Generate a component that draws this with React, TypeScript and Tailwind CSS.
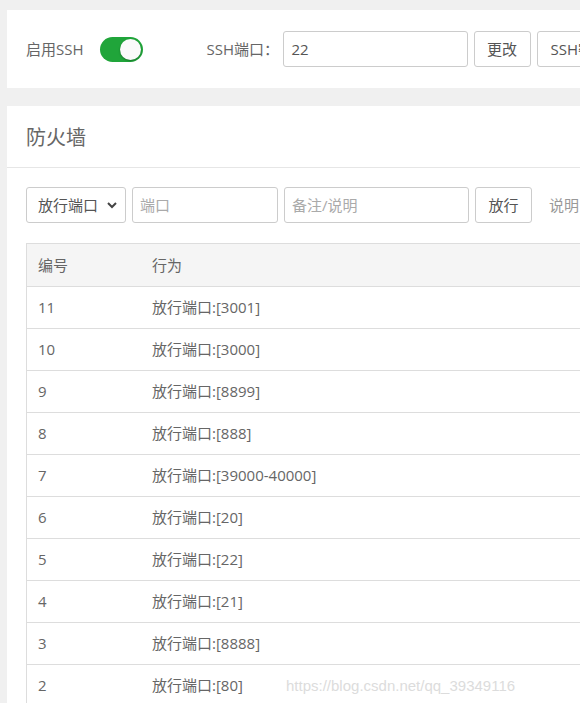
import React from "react";

const rows: { id: number; action: string }[] = [
  { id: 11, action: "放行端口:[3001]" },
  { id: 10, action: "放行端口:[3000]" },
  { id: 9, action: "放行端口:[8899]" },
  { id: 8, action: "放行端口:[888]" },
  { id: 7, action: "放行端口:[39000-40000]" },
  { id: 6, action: "放行端口:[20]" },
  { id: 5, action: "放行端口:[22]" },
  { id: 4, action: "放行端口:[21]" },
  { id: 3, action: "放行端口:[8888]" },
  { id: 2, action: "放行端口:[80]" },
];

const font = {
  fontFamily: '"Open Sans", "Noto Sans CJK SC", sans-serif',
};

export default function App() {
  return (
    <div
      className="relative w-[580px] h-[703px] overflow-hidden bg-[#f0f0f0] pl-[7px] pt-[10px] text-[15px] text-[#666]"
      style={font}
    >
      {/* SSH panel */}
      <div className="w-[700px] h-[78px] bg-white flex items-center px-[19px]">
        <span>启用SSH</span>
        <div className="ml-[16px] w-[43px] h-[25px] rounded-full bg-[#20a53a] flex items-center justify-end pr-[2px]">
          <div className="w-[21px] h-[21px] rounded-full bg-[#fafafa] shadow-[0_1px_2px_rgba(0,0,0,0.3)]" />
        </div>
        <span className="ml-[64px] w-[76px]">SSH端口：</span>
        <div className="w-[185px] h-[36px] border border-[#ccc] rounded-[3px] flex items-center pl-[8px] text-[#555]">
          22
        </div>
        <button className="ml-[6px] w-[57px] h-[36px] border border-[#ccc] rounded-[3px] bg-white text-[#555]">
          更改
        </button>
        <button className="ml-[6px] h-[36px] px-[13px] border border-[#ccc] rounded-[3px] bg-white text-[#555] whitespace-nowrap">
          SSH密钥
        </button>
      </div>

      {/* Firewall panel */}
      <div className="mt-[18px] w-[700px] bg-white">
        <div className="h-[62px] flex items-center px-[19px] pt-[3px] border-b border-[#e6e6e6] text-[20px] text-[#666]">
          防火墙
        </div>
        <div className="px-[19px] pt-[19px]">
          <div className="flex items-center">
            <div className="w-[100px] h-[36px] border border-[#ccc] rounded-[3px] flex items-center justify-between pl-[11px] pr-[7px] text-[#555]">
              <span>放行端口</span>
              <svg width="12" height="12" viewBox="0 0 12 12" fill="none">
                <path d="M2 4l4 4 4-4" stroke="#444" strokeWidth="2" />
              </svg>
            </div>
            <div className="ml-[6px] w-[146px] h-[36px] border border-[#ccc] rounded-[3px] flex items-center pl-[7px] text-[#aaa]">
              端口
            </div>
            <div className="ml-[6px] w-[185px] h-[36px] border border-[#ccc] rounded-[3px] flex items-center pl-[7px] text-[#aaa]">
              备注/说明
            </div>
            <button className="ml-[6px] w-[57px] h-[36px] border border-[#ccc] rounded-[3px] bg-white text-[#555]">
              放行
            </button>
            <span className="ml-[17px] text-[#999] whitespace-nowrap">说明：</span>
          </div>

          <div className="mt-[20px] border border-[#ddd]">
            <div className="h-[42px] flex items-center bg-[#f5f5f5]">
              <div className="w-[115px] pl-[11px]">编号</div>
              <div className="pl-[10px]">行为</div>
            </div>
            {rows.map((r) => (
              <div key={r.id} className="h-[42px] flex items-center border-t border-[#ddd]">
                <div className="w-[115px] pl-[11px]">{r.id}</div>
                <div className="pl-[10px]">{r.action}</div>
              </div>
            ))}
          </div>
        </div>
      </div>

      <div
        className="absolute left-[286px] top-[675px] text-[15px] text-[#dcdcdc]"
        style={{ fontFamily: '"Liberation Sans", Arial, sans-serif' }}
      >
        https://blog.csdn.net/qq_39349116
      </div>
    </div>
  );
}
